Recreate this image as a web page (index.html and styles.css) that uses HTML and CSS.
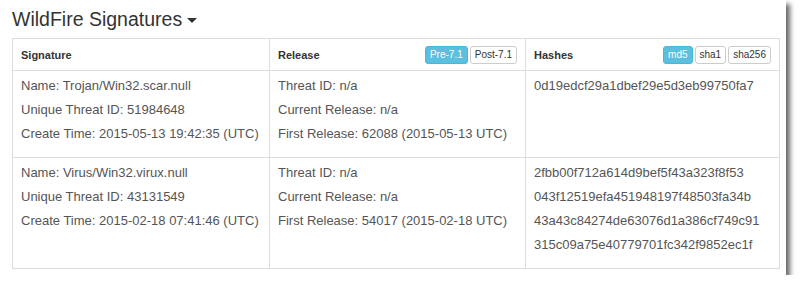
FILE: index.html
```html
<!DOCTYPE html>
<html>
<head>
<meta charset="utf-8">
<link rel="stylesheet" href="styles.css">
</head>
<body>
<div class="frame">
  <div class="title">WildFire Signatures<span class="caret"></span></div>
  <table class="sig-table">
    <colgroup><col class="c1"><col class="c2"><col class="c3"></colgroup>
    <thead>
      <tr>
        <th><div class="th-inner"><span>Signature</span></div></th>
        <th><div class="th-inner"><span>Release</span>
          <div class="btn-group"><span class="btn active">Pre-7.1</span><span class="btn">Post-7.1</span></div></div></th>
        <th><div class="th-inner"><span>Hashes</span>
          <div class="btn-group"><span class="btn active">md5</span><span class="btn">sha1</span><span class="btn">sha256</span></div></div></th>
      </tr>
    </thead>
    <tbody>
      <tr class="row1">
        <td><div class="line">Name: Trojan/Win32.scar.null</div><div class="line">Unique Threat ID: 51984648</div><div class="line">Create Time: 2015-05-13 19:42:35 (UTC)</div></td>
        <td><div class="line">Threat ID: n/a</div><div class="line">Current Release: n/a</div><div class="line">First Release: 62088 (2015-05-13 UTC)</div></td>
        <td><div class="line">0d19edcf29a1dbef29e5d3eb99750fa7</div></td>
      </tr>
      <tr class="row2">
        <td><div class="line">Name: Virus/Win32.virux.null</div><div class="line">Unique Threat ID: 43131549</div><div class="line">Create Time: 2015-02-18 07:41:46 (UTC)</div></td>
        <td><div class="line">Threat ID: n/a</div><div class="line">Current Release: n/a</div><div class="line">First Release: 54017 (2015-02-18 UTC)</div></td>
        <td><div class="line">2fbb00f712a614d9bef5f43a323f8f53</div><div class="line">043f12519efa451948197f48503fa34b</div><div class="line">43a43c84274de63076d1a386cf749c91</div><div class="line">315c09a75e40779701fc342f9852ec1f</div></td>
      </tr>
    </tbody>
  </table>
</div>
</body>
</html>
```

FILE: styles.css
```css
html, body {
  margin: 0;
  padding: 0;
  background: #fff;
}
body {
  font-family: "Liberation Sans", Arial, sans-serif;
  color: #555;
}
.frame {
  width: 786px;
  height: 275px;
  background: #fff;
  box-shadow: 4px 4px 5px rgba(0, 0, 0, 0.6);
  box-sizing: border-box;
  padding: 7px 0 0 12px;
}
.title {
  font-size: 19.5px;
  line-height: 24px;
  height: 24px;
  color: #333;
  margin-bottom: 7px;
}
.caret {
  display: inline-block;
  width: 0;
  height: 0;
  margin-left: 5px;
  vertical-align: middle;
  border-top: 5px solid #333;
  border-left: 5px solid transparent;
  border-right: 5px solid transparent;
}
.sig-table {
  border-collapse: collapse;
  table-layout: fixed;
  width: 767px;
}
.c1 { width: 257px; }
.c2 { width: 256px; }
.c3 { width: 254px; }
.sig-table th, .sig-table td {
  border: 1px solid #ddd;
  text-align: left;
  vertical-align: top;
}
.sig-table th {
  height: 31px;
  padding: 0 8px;
  font-size: 11px;
  font-weight: bold;
  color: #333;
  vertical-align: middle;
}
.th-inner {
  display: flex;
  align-items: center;
  justify-content: space-between;
}
.btn-group {
  display: flex;
  gap: 2px;
}
.btn {
  display: inline-block;
  font-size: 10px;
  font-weight: normal;
  line-height: 16px;
  padding: 0 4px;
  border: 1px solid #ccc;
  border-radius: 3px;
  color: #333;
  background: #fff;
}
.btn.active {
  background: #5bc0de;
  border-color: #46b8da;
  color: #fff;
}
.sig-table td {
  padding: 3px 8px 11px;
  font-size: 13px;
  line-height: 24px;
}
.line {
  white-space: nowrap;
}
```
